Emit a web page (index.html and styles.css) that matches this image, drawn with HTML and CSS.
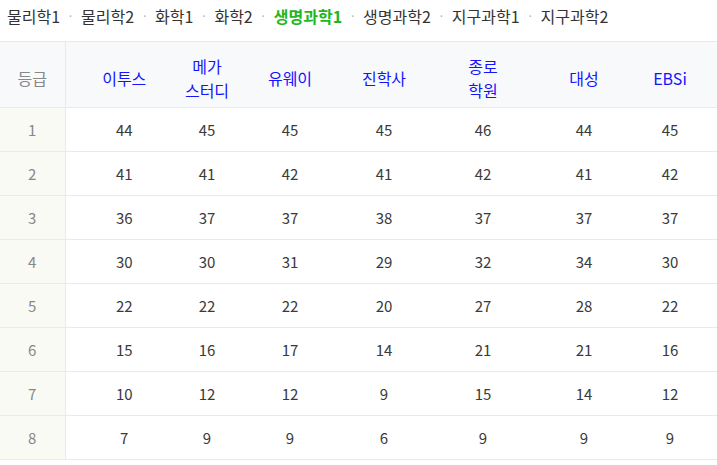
FILE: index.html
```html
<!DOCTYPE html>
<html lang="ko">
<head>
<meta charset="utf-8">
<link rel="stylesheet" href="styles.css">
</head>
<body>
<nav class="tabs">
  <a class="tab">물리학1</a><span class="sep">·</span>
  <a class="tab">물리학2</a><span class="sep">·</span>
  <a class="tab">화학1</a><span class="sep">·</span>
  <a class="tab">화학2</a><span class="sep">·</span>
  <a class="tab active">생명과학1</a><span class="sep">·</span>
  <a class="tab">생명과학2</a><span class="sep">·</span>
  <a class="tab">지구과학1</a><span class="sep">·</span>
  <a class="tab">지구과학2</a>
</nav>
<table class="grades">
  <colgroup>
    <col class="c-grade"><col class="c1"><col class="c2"><col class="c3"><col class="c4"><col class="c5"><col class="c6"><col class="c7">
  </colgroup>
  <thead>
    <tr>
      <th class="grade">등급</th>
      <th>이투스</th>
      <th>메가<br>스터디</th>
      <th>유웨이</th>
      <th>진학사</th>
      <th>종로<br>학원</th>
      <th>대성</th>
      <th>EBSi</th>
    </tr>
  </thead>
  <tbody>
    <tr><td class="grade">1</td><td>44</td><td>45</td><td>45</td><td>45</td><td>46</td><td>44</td><td>45</td></tr>
    <tr><td class="grade">2</td><td>41</td><td>41</td><td>42</td><td>41</td><td>42</td><td>41</td><td>42</td></tr>
    <tr><td class="grade">3</td><td>36</td><td>37</td><td>37</td><td>38</td><td>37</td><td>37</td><td>37</td></tr>
    <tr><td class="grade">4</td><td>30</td><td>30</td><td>31</td><td>29</td><td>32</td><td>34</td><td>30</td></tr>
    <tr><td class="grade">5</td><td>22</td><td>22</td><td>22</td><td>20</td><td>27</td><td>28</td><td>22</td></tr>
    <tr><td class="grade">6</td><td>15</td><td>16</td><td>17</td><td>14</td><td>21</td><td>21</td><td>16</td></tr>
    <tr><td class="grade">7</td><td>10</td><td>12</td><td>12</td><td>9</td><td>15</td><td>14</td><td>12</td></tr>
    <tr><td class="grade">8</td><td>7</td><td>9</td><td>9</td><td>6</td><td>9</td><td>9</td><td>9</td></tr>
  </tbody>
</table>
</body>
</html>
```
FILE: styles.css
```css
html, body {
  margin: 0;
  padding: 0;
  background: #fff;
}
body {
  font-family: "Noto Sans CJK KR", "Noto Sans", sans-serif;
  color: #333;
  width: 717px;
  overflow: hidden;
}
.tabs {
  display: flex;
  align-items: center;
  height: 34px;
  padding: 0 0 2px 7px;
  font-size: 16px;
  line-height: 20px;
  box-sizing: border-box;
}
.tab {
  color: #333;
  white-space: nowrap;
}
.tab.active {
  color: #1fb71f;
  font-weight: 700;
}
.sep {
  color: #b5b5b5;
  width: 21px;
  text-align: center;
  font-size: 12px;
  flex: none;
}
.grades {
  border-collapse: collapse;
  table-layout: fixed;
  width: 719px;
  margin-top: 7px;
  font-size: 15px;
}
.c-grade { width: 65px; }
.c1 { width: 118px; }
.c2 { width: 48px; }
.c3 { width: 118px; }
.c4 { width: 70px; }
.c5 { width: 128px; }
.c6 { width: 74px; }
.c7 { width: 98px; }
.grades th, .grades td {
  padding: 0;
  text-align: center;
  vertical-align: middle;
  border-bottom: 1px solid #e8eaef;
  line-height: 24px;
}
.grades thead th {
  background: #f8f9fb;
  color: #1414ff;
  font-weight: 400;
  font-size: 16px;
  height: 66px;
  padding-top: 6px;
  box-sizing: border-box;
  border-top: 1px solid #e8eaef;
}
.grades thead th.grade {
  color: #888;
}
.grades td {
  height: 44px;
  box-sizing: border-box;
  padding-top: 1px;
  color: #3a3a3a;
}
.grades .grade {
  border-right: 1px solid #e8eaef;
}
.grades td.grade {
  background: #fafaf5;
  color: #888;
}
```
